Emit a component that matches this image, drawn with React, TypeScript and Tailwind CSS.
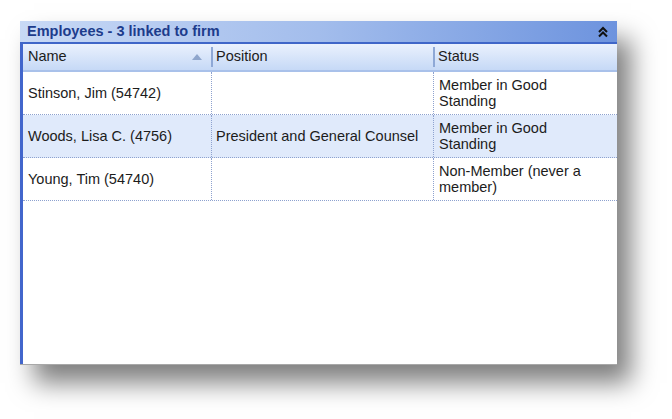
const rows = [
  { name: "Stinson, Jim (54742)", position: "", status: "Member in Good Standing", selected: false },
  { name: "Woods, Lisa C. (4756)", position: "President and General Counsel", status: "Member in Good Standing", selected: true },
  { name: "Young, Tim (54740)", position: "", status: "Non-Member (never a member)", selected: false },
];

function CollapseIcon() {
  return (
    <svg width="12" height="12" viewBox="0 0 12 12" fill="none" stroke="#111" strokeWidth="2">
      <path d="M2 6 L6 2 L10 6" />
      <path d="M2 10.5 L6 6.5 L10 10.5" />
    </svg>
  );
}

export default function App() {
  return (
    <div className="h-[419px] w-[672px] bg-white pl-[20px] pt-[21px] font-['Liberation_Sans',Arial,sans-serif]">
      <div className="flex h-[344px] w-[597px] flex-col border-b border-b-[#a8a8a8] bg-white shadow-[14px_18px_24px_rgba(0,0,0,0.5)]">
        <div className="flex h-[23px] items-center justify-between border-b-2 border-b-[#3f66c8] bg-gradient-to-r from-[#c8d9f5] via-[#a3bdec] to-[#6d93de] pl-[7px] pr-[8px]">
          <span className="text-[14.5px] font-bold text-[#1d3c8c]">Employees - 3 linked to firm</span>
          <CollapseIcon />
        </div>
        <div className="flex flex-1 flex-col border-l-[3px] border-l-[#4266cc]">
          <div className="flex h-[28px] border-b-2 border-b-[#a9c1ea] bg-gradient-to-b from-[#eaf1fd] to-[#c6d9f6] text-[14.5px] text-[#1c1c1c]">
            <div className="flex w-[188px] items-center justify-between pl-[5px] pr-[9px]">
              <span>Name</span>
              <svg width="10" height="6" viewBox="0 0 10 6">
                <path d="M0 6 L5 0 L10 6 Z" fill="#8fa6cc" />
              </svg>
            </div>
            <div className="flex w-[222px] items-center">
              <div className="h-[20px] w-[2px] bg-[#8ea8d6]" />
              <span className="pl-[3px]">Position</span>
            </div>
            <div className="flex flex-1 items-center">
              <div className="h-[20px] w-[2px] bg-[#8ea8d6]" />
              <span className="pl-[3px]">Status</span>
            </div>
          </div>
          {rows.map((row) => (
            <div
              key={row.name}
              className={`flex h-[43px] border-b border-dotted border-b-[#8ea2cf] text-[14.5px] leading-[16px] text-[#1c1c1c] ${row.selected ? "bg-[#e0eafb]" : "bg-white"}`}
            >
              <div className="flex w-[188px] items-center pl-[5px]">{row.name}</div>
              <div className="flex w-[222px] items-center border-l border-dotted border-l-[#8ea2cf] pl-[4px]">
                {row.position}
              </div>
              <div className="flex flex-1 items-center border-l border-dotted border-l-[#8ea2cf] pl-[5px] pr-[22px]">
                {row.status}
              </div>
            </div>
          ))}
        </div>
      </div>
    </div>
  );
}
